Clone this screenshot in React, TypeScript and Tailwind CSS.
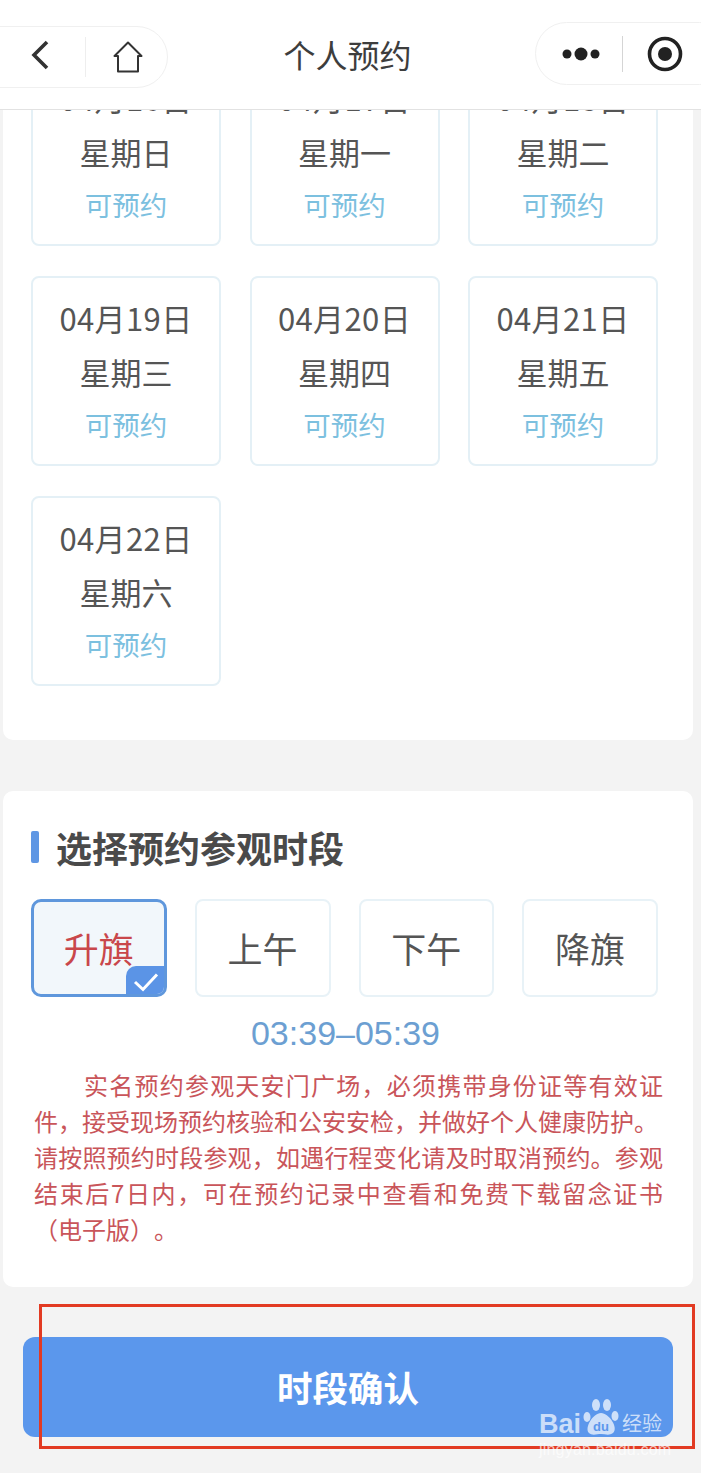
import React from 'react';

const cjk = "font-['Noto_Sans_CJK_SC','Noto_Sans',sans-serif]";

const days = [
  { date: '04月16日', week: '星期日' },
  { date: '04月17日', week: '星期一' },
  { date: '04月18日', week: '星期二' },
  { date: '04月19日', week: '星期三' },
  { date: '04月20日', week: '星期四' },
  { date: '04月21日', week: '星期五' },
  { date: '04月22日', week: '星期六' },
];

const periods = ['升旗', '上午', '下午', '降旗'];

function TopBar() {
  return (
    <header className="relative z-10 flex h-[110px] items-start border-b border-[#e2e2e2] bg-white">
      {/* left capsule */}
      <div className="mt-[26px] -ml-[30px] flex h-[62px] w-[198px] items-center rounded-full border border-[#f0f0f0] pl-[58px]">
        <svg width="20" height="30" viewBox="0 0 20 30" fill="none" className="-mt-[5px] ml-[1px]">
          <path d="M17 2 L4 15 L17 28" stroke="#333" strokeWidth="3.6" />
        </svg>
        <div className="ml-[35px] h-[40px] w-px bg-[#eeeeee]" />
        <svg width="30" height="32" viewBox="0 0 30 32" fill="none" className="ml-[27px]">
          <path d="M1.5 15 L15 1.5 L28.5 15 H25 V30.5 H5 V15 Z" stroke="#333" strokeWidth="2" strokeLinejoin="round" />
        </svg>
      </div>
      <h1 className={`${cjk} mt-[29px] flex-1 pr-[8px] text-center text-[32px] leading-[50px] text-[#3d3d3d]`}>个人预约</h1>
      {/* right capsule */}
      <div className="mt-[22px] -mr-[30px] flex h-[63px] w-[196px] items-center rounded-full border border-[#f0f0f0] pl-[26px]">
        <svg width="38" height="16" viewBox="0 0 38 16" className="mt-[1px]">
          <circle cx="5" cy="8" r="4.5" fill="#222" />
          <circle cx="19" cy="8" r="6.5" fill="#222" />
          <circle cx="33" cy="8" r="4.5" fill="#222" />
        </svg>
        <div className="ml-[22px] h-[36px] w-px bg-[#d5d5d5]" />
        <svg width="36" height="36" viewBox="0 0 36 36" fill="none" className="ml-[24px]">
          <circle cx="18" cy="18" r="15.5" stroke="#222" strokeWidth="3.6" />
          <circle cx="18" cy="18" r="7" fill="#222" />
        </svg>
      </div>
    </header>
  );
}

function DayCard({ date, week }: { date: string; week: string }) {
  return (
    <div className={`${cjk} flex h-[190px] flex-col items-center rounded-[8px] border-2 border-[#e4f0f6] bg-white pt-[20px]`}>
      <div className="text-[31px] leading-[40px] tracking-[0.4px] text-[#555555]">{date}</div>
      <div className="mt-[14px] text-[31px] leading-[40px] text-[#555555]">{week}</div>
      <div className="mt-[12px] text-[27.5px] leading-[40px] text-[#7cc0df]">可预约</div>
    </div>
  );
}

function PeriodButton({ label, active }: { label: string; active: boolean }) {
  if (active) {
    return (
      <div className={`${cjk} relative flex h-[98px] items-center justify-center overflow-hidden rounded-[10px] border-[3px] border-[#5f97dc] bg-[#f2f7fb] text-[35px] text-[#c9474b]`}>
        {label}
        <div className="absolute -right-[3px] -bottom-[3px] flex h-[31px] w-[41px] items-center justify-center rounded-tl-[10px] bg-[#5b94e6]">
          <svg width="26" height="20" viewBox="0 0 26 20" fill="none">
            <path d="M2 10 L10 17.5 L24 2.5" stroke="#fff" strokeWidth="3" />
          </svg>
        </div>
      </div>
    );
  }
  return (
    <div className={`${cjk} flex h-[98px] items-center justify-center rounded-[8px] border-2 border-[#e8f2f7] bg-white text-[35px] text-[#555555]`}>
      {label}
    </div>
  );
}

function Watermark() {
  return (
    <div className="pointer-events-none absolute top-[1398px] left-[539px] w-[124px] text-white/70">
      <div className="flex h-[38px] items-end">
        <span className="font-['Liberation_Sans',sans-serif] text-[27px] leading-[24px] font-bold">Bai</span>
        <svg width="38" height="38" viewBox="0 0 38 38" className="ml-[1px] shrink-0">
          <ellipse cx="5" cy="19" rx="3.5" ry="5" fill="currentColor" />
          <ellipse cx="14" cy="7" rx="4" ry="6" fill="currentColor" />
          <ellipse cx="25" cy="7" rx="4" ry="6" fill="currentColor" />
          <ellipse cx="33" cy="18" rx="3.5" ry="5" fill="currentColor" />
          <path d="M19 15 C27 15 37 30 31 35 C27 38 23 36 19 36 C15 36 10 38 7 35 C2 30 11 15 19 15 Z" fill="currentColor" />
          <text x="19" y="33" textAnchor="middle" fontSize="13" fontWeight="700" fill="#5b97ec" fontFamily="Liberation Sans">du</text>
        </svg>
        <span className={`${cjk} ml-[2px] text-[20px] leading-[26px] whitespace-nowrap`}>经验</span>
      </div>
      <div className="mt-[5px] font-['Liberation_Sans',sans-serif] text-[16px] leading-[18px] tracking-[0.2px] whitespace-nowrap">jingyan.baidu.com</div>
    </div>
  );
}

export default function App() {
  return (
    <div className="relative h-[1473px] w-[701px] overflow-hidden bg-[#f3f3f3]">
      <TopBar />

      {/* page is scrolled, the first row of dates runs under the top bar */}
      <main className="-mt-[110px] pr-[8px] pl-[3px]">
        <section className="rounded-[10px] bg-white pt-[56px] pr-[35px] pb-[54px] pl-[28px]">
          <div className="grid grid-cols-3 gap-x-[28.5px] gap-y-[30px]">
            {days.map((d) => (
              <DayCard key={d.date} date={d.date} week={d.week} />
            ))}
          </div>
        </section>

        <section className="mt-[51px] rounded-[10px] bg-white pt-[38px] pr-[30px] pb-[40px] pl-[28px]">
          <div className="flex h-[36px] items-center">
            <div className="h-[32px] w-[8px] rounded-[2px] bg-[#5f97e4]" />
            <h2 className={`${cjk} ml-[17px] text-[36px] leading-[36px] font-bold text-[#4a4a4a]`}>选择预约参观时段</h2>
          </div>

          <div className="mt-[34px] mr-[5px] grid grid-cols-4 gap-x-[28px]">
            {periods.map((p, i) => (
              <PeriodButton key={p} label={p} active={i === 0} />
            ))}
          </div>

          <div className="mt-[16px] pr-[3px] text-center font-['Liberation_Sans',sans-serif] text-[34px] leading-[40px] text-[#6c9fd2]">
            03:39–05:39
          </div>

          <div className={`${cjk} mt-[14px] pl-[3px] text-[24px] leading-[36px] text-[#c9555a] [text-spacing-trim:space-all]`}>
            <p className="pl-[50px] whitespace-nowrap [text-align-last:justify]">实名预约参观天安门广场，必须携带身份证等有效证</p>
            <p className="whitespace-nowrap">件，接受现场预约核验和公安安检，并做好个人健康防护。</p>
            <p className="whitespace-nowrap [text-align-last:justify]">请按照预约时段参观，如遇行程变化请及时取消预约。参观</p>
            <p className="whitespace-nowrap [text-align-last:justify]">结束后7日内，可在预约记录中查看和免费下载留念证书</p>
            <p className="whitespace-nowrap">（电子版）。</p>
          </div>
        </section>

        <div className="mt-[50px] px-[20px]">
          <button className={`${cjk} h-[100px] w-full rounded-[12px] bg-[#5b97ec] text-[35.5px] font-bold text-white`}>
            时段确认
          </button>
        </div>
      </main>

      {/* red annotation box and watermark sit on top of the screenshot */}
      <div className="pointer-events-none absolute top-[1304px] left-[39px] h-[145px] w-[656px] border-[3px] border-[#e23a22]" />
      <Watermark />
    </div>
  );
}
